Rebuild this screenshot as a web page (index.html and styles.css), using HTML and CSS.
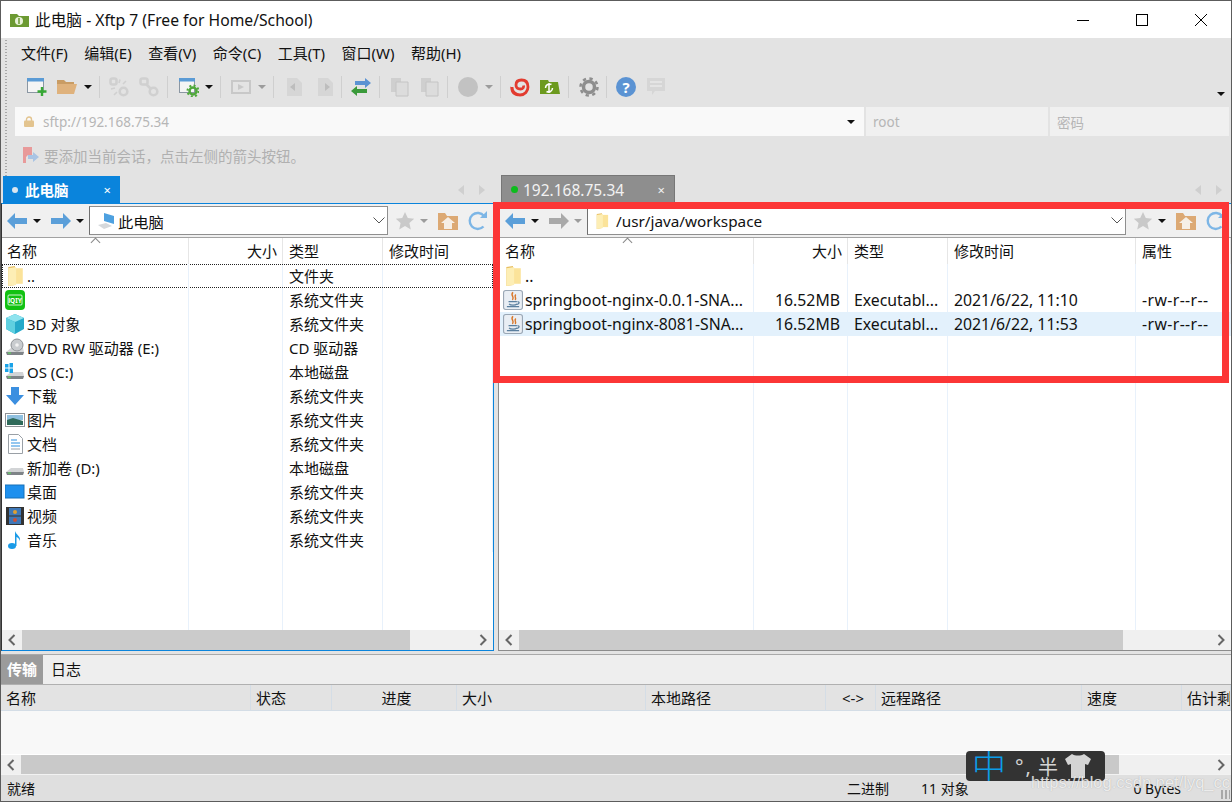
FILE: index.html
```html
<!DOCTYPE html>
<html lang="zh-CN">
<head>
    <meta charset="UTF-8">
    <title>此电脑 - Xftp 7</title>
    <link rel="stylesheet" href="styles.css">
</head>
<body>
<svg class="defs" xmlns="http://www.w3.org/2000/svg">
    <symbol id="back" viewBox="0 0 20 16"><path d="M0 8 8 0V5H20V11H8V16Z"/></symbol>
    <symbol id="forward" viewBox="0 0 20 16"><path d="M20 8 12 0V5H0V11H12V16Z"/></symbol>
    <symbol id="star" viewBox="0 0 20 20"><path d="M10 1l2.8 6 6.4.7-4.8 4.3 1.4 6.4L10 15.100 4.200 18.400 5.600 12 .8 7.700 7.200 7Z" fill="#c9c9c9"/></symbol>
    <symbol id="home" viewBox="0 0 20 18"><path d="M0 1h7l2 3h11v14H0Z" fill="#dca974"/><path d="M3 11 10 5l7 6h-3v6H6v-6Z" fill="#f6efe6"/></symbol>
    <symbol id="refresh" viewBox="0 0 20 20"><path d="M15.500 15.500A8 8 0 1 1 16 5" fill="none" stroke="#7db6e6" stroke-width="2.400"/><path d="M12 7h7V0Z" fill="#7db6e6"/></symbol>
    <symbol id="folder" viewBox="0 0 16 18"><path d="M2 1 8 0v17l-6 1Z" fill="#e8bf62"/><path d="M7 2h8v14H7Z" fill="#fbe39a"/><path d="M2 2 9 1v16l-7 1Z" fill="#fdeeb5"/></symbol>
    <symbol id="java" viewBox="0 0 18 18">
        <rect x=".5" y=".5" width="17" height="17" rx="2" fill="#e9eef4" stroke="#9aa7b5"/>
        <path d="M9 2C6 5 11 6 8.500 9M11.500 4C9.500 6 12.500 7 11 9" fill="none" stroke="#d9772a" stroke-width="1.300"/>
        <path d="M5 10.500h7.500M5.500 12.500c1 1.500 6 1.500 7 0M13 10.500c2 0 2 2-.5 2.500M3.500 15h11" fill="none" stroke="#5a7f9f" stroke-width="1.100"/>
    </symbol>
    <symbol id="drive" viewBox="0 0 20 20"><path d="M1 14 6 10h12l1 4-1 3H2Z" fill="#d2d4d6"/><path d="M1 14h18l-1 3H2Z" fill="#7f8488"/><rect x="3" y="14.500" width="3" height="1.200" fill="#5fd35f"/></symbol>
</svg>

<div class="window">
    <div class="titlebar">
        <svg class="title-icon" viewBox="0 0 19 14"><path d="M0 1h7l2 2h10v11H0Z" fill="#6c9a32"/><circle cx="9" cy="8" r="4" fill="#e8f2d8"/><path d="M9 5v6" stroke="#6c9a32" stroke-width="1.500"/></svg>
        <span class="title-text">此电脑 - Xftp 7 (Free for Home/School)</span>
        <div class="win-buttons">
            <svg class="win-btn" viewBox="0 0 12 12"><path d="M0 6.500h12" stroke="#000"/></svg>
            <svg class="win-btn" viewBox="0 0 12 12"><rect x=".5" y=".5" width="11" height="11" fill="none" stroke="#000"/></svg>
            <svg class="win-btn" viewBox="0 0 12 12"><path d="M0 0 12 12M12 0 0 12" stroke="#000"/></svg>
        </div>
    </div>

    <div class="chrome">
        <div class="menu">
            <span>文件(F)</span><span>编辑(E)</span><span>查看(V)</span><span>命令(C)</span><span>工具(T)</span><span>窗口(W)</span><span>帮助(H)</span>
        </div>

        <div class="toolbar">
            <svg class="tool" viewBox="0 0 20 20"><rect x=".5" y="1.500" width="16" height="14" fill="#f5f5f5" stroke="#8b97a3"/><rect y="1" width="17" height="3.500" fill="#5b9bd5"/><path d="M15 10v9M10.500 14.500h9" stroke="#37a835" stroke-width="2.400"/></svg>
            <svg class="tool" viewBox="0 0 20 20"><path d="M0 3h7l2 2h8v3H0Z" fill="#c99c64"/><path d="M0 17V7h20l-3 10Z" fill="#dfb27d"/></svg>
            <i class="caret"></i>
            <i class="sep"></i>
            <svg class="tool" viewBox="0 0 20 20" fill="none" stroke="#d0d0d0" stroke-width="2.600"><rect x="1.500" y="1.500" width="6" height="6" rx="2"/><circle cx="14.500" cy="14.500" r="3.800"/><path d="M11 2.500 10 6M17 4l-3 3M2 12l4-1M5 18l3-3" stroke-width="1.600"/></svg>
            <svg class="tool" viewBox="0 0 20 20" fill="none" stroke="#d0d0d0" stroke-width="2.600"><rect x="1.500" y="1.500" width="7" height="6" rx="2"/><circle cx="14.500" cy="14.500" r="3.800"/><path d="M7 7l5 5"/></svg>
            <i class="sep"></i>
            <svg class="tool" viewBox="0 0 20 20"><rect x=".5" y="1.500" width="15" height="14" fill="#f5f5f5" stroke="#8b97a3"/><rect y="1" width="16" height="3.500" fill="#5b9bd5"/><circle cx="14" cy="14" r="3.500" fill="none" stroke="#4fa83a" stroke-width="2.500"/><circle cx="14" cy="14" r="5.500" fill="none" stroke="#4fa83a" stroke-width="2" stroke-dasharray="2 2.300"/></svg>
            <i class="caret"></i>
            <i class="sep"></i>
            <svg class="tool" viewBox="0 0 20 20"><rect x="1" y="4" width="18" height="12" fill="none" stroke="#c8c8c8" stroke-width="2"/><path d="M7 7v6l6-3Z" fill="#c8c8c8"/></svg>
            <i class="caret off"></i>
            <i class="sep"></i>
            <svg class="tool" viewBox="0 0 20 20"><path d="M2 1h10l5 5v13H2Z" fill="#d6d6d6"/><path d="M5 10l5-4v8Z" fill="#bdbdbd"/></svg>
            <svg class="tool" viewBox="0 0 20 20"><path d="M2 1h10l5 5v13H2Z" fill="#d6d6d6"/><path d="M14 10 9 6v8Z" fill="#bdbdbd"/></svg>
            <i class="sep"></i>
            <svg class="tool" viewBox="0 0 20 20"><path d="M20 6 14 1v3H4v4h10v3Z" fill="#5b93d3"/><path d="M0 14l6-5v3h10v4H6v3Z" fill="#3a9a3a"/></svg>
            <i class="sep"></i>
            <svg class="tool" viewBox="0 0 20 20"><path d="M1 1h10v14H1Z" fill="#cfcfcf"/><path d="M6 5h12v14H6Z" fill="#dcdcdc" stroke="#c4c4c4"/></svg>
            <svg class="tool" viewBox="0 0 20 20"><path d="M1 1h10v14H1Z" fill="#cfcfcf"/><path d="M6 5h12v14H6Z" fill="#dcdcdc" stroke="#c4c4c4"/></svg>
            <i class="sep"></i>
            <svg class="tool" viewBox="0 0 20 20"><circle cx="10" cy="10" r="10" fill="#c2c2c2"/></svg>
            <i class="caret off"></i>
            <i class="sep"></i>
            <svg class="tool" viewBox="0 0 20 20"><path d="M2 10c0 5 4 8 8 8 5 0 8-4 8-8 0-5-3-7-6.500-7S6 5 6 8c0 3 2 4 4.500 4s3.500-1.500 3-3.500" fill="none" stroke="#e23c30" stroke-width="2.800"/><path d="M.5 9c1 5 4 8 9 10-5 1-10-3-9-10Z" fill="#e23c30"/></svg>
            <svg class="tool" viewBox="0 0 20 20"><path d="M0 3h8l1 2h9l2 12H0Z" fill="#6c9a1e"/><path d="M5.500 11a4 4 0 0 1 6-3.500M12.500 11a4 4 0 0 1-6 3.500M9 6v10" fill="none" stroke="#fff" stroke-width="1.500"/></svg>
            <i class="sep"></i>
            <svg class="tool" viewBox="0 0 20 20"><circle cx="10" cy="10" r="5.500" fill="none" stroke="#8e8e8e" stroke-width="3.500"/><circle cx="10" cy="10" r="8.500" fill="none" stroke="#8e8e8e" stroke-width="2.500" stroke-dasharray="3.300 3.400"/></svg>
            <i class="sep"></i>
            <svg class="tool" viewBox="0 0 20 20"><circle cx="10" cy="10" r="10" fill="#5b93d3"/><text x="10" y="15.500" class="help-mark">?</text></svg>
            <svg class="tool" viewBox="0 0 20 20"><path d="M1 1h18v13H9l-3 4v-4H1Z" fill="#d6d6d6"/><path d="M4 5h12M4 9h12" stroke="#e9e9e9" stroke-width="1.500"/></svg>
            <i class="caret end"></i>
        </div>

        <div class="address">
            <div class="addr-main">
                <svg class="lock" viewBox="0 0 10 11"><path d="M2.500 5V3.500a2.500 2.500 0 0 1 5 0V5" fill="none" stroke="#e3c48f" stroke-width="1.400"/><rect y="4.500" width="10" height="6.500" rx="1" fill="#e3c48f"/></svg>
                <span class="addr-url">sftp://192.168.75.34</span>
                <i class="caret"></i>
            </div>
            <div class="addr-field addr-user">root</div>
            <div class="addr-field addr-pass">密码</div>
        </div>

        <div class="hint">
            <svg class="hint-icon" viewBox="0 0 16 16"><path d="M0 0h9v10L5 8l-2 2v6H0Z" fill="#e89a9a"/><path d="M16 10l-6-5v3H5v4h5v3Z" fill="#a9c4e4"/></svg>
            <span>要添加当前会话，点击左侧的箭头按钮。</span>
        </div>
    </div>

    <div class="panes">
        <div class="side side-local">
            <div class="tabstrip">
                <div class="tab tab-active"><i class="dot dot-white"></i><span class="tab-label">此电脑</span><span class="tab-close">×</span></div>
                <div class="tab-arrows"><i class="tri-left"></i><i class="tri-right"></i></div>
            </div>
            <div class="pane pane-local">
                <div class="nav">
                    <svg class="nav-arrow arrow-on"><use href="#back"/></svg>
                    <i class="caret"></i>
                    <svg class="nav-arrow arrow-on nav-fwd"><use href="#forward"/></svg>
                    <i class="caret"></i>
                    <div class="path">
                        <svg class="path-pc" viewBox="0 0 18 18"><path d="M7 1l10 3v8L7 9Z" fill="#4ea1e0"/><path d="M1 13l8-2 6 3-8 3Z" fill="#d5d8db"/></svg>
                        <span class="path-text">此电脑</span>
                        <svg class="chevron" viewBox="0 0 12 7"><path d="M.5 .5 6 6 11.500 .5" fill="none" stroke="#555"/></svg>
                    </div>
                    <svg class="nav-star"><use href="#star"/></svg>
                    <i class="caret off"></i>
                    <svg class="nav-home"><use href="#home"/></svg>
                    <svg class="nav-refresh"><use href="#refresh"/></svg>
                </div>
                <div class="row head">
                    <div class="cell name">名称<i class="sort"></i></div>
                    <div class="cell size">大小</div>
                    <div class="cell">类型</div>
                    <div class="cell">修改时间</div>
                </div>
                <div class="list">
                    <div class="row focus"><div class="cell name"><svg class="file-icon"><use href="#folder"/></svg>..</div><div class="cell size"></div><div class="cell">文件夹</div><div class="cell"></div></div>
                    <div class="row"><div class="cell name"><svg class="file-icon" viewBox="0 0 20 20"><rect width="20" height="20" rx="4" fill="#12c212"/><rect x="3" y="5" width="14" height="10" rx="1" fill="none" stroke="#fff" stroke-width=".8"/><text x="10" y="13" class="iqiyi">iQIY</text></svg></div><div class="cell size"></div><div class="cell">系统文件夹</div><div class="cell"></div></div>
                    <div class="row"><div class="cell name"><svg class="file-icon" viewBox="0 0 20 20"><path d="M10 0l9 4v11l-9 5-9-5V4Z" fill="#25a9c9"/><path d="M10 0l9 4-9 4-9-4Z" fill="#8fe3ee"/><path d="M1 4l9 4v12l-9-5Z" fill="#5fd0e0"/></svg>3D 对象</div><div class="cell size"></div><div class="cell">系统文件夹</div><div class="cell"></div></div>
                    <div class="row"><div class="cell name"><svg class="file-icon" viewBox="0 0 20 20"><use href="#drive"/><circle cx="12" cy="7" r="6" fill="#c9cccf" stroke="#8e9296"/><circle cx="12" cy="7" r="1.800" fill="#f3f3f3"/></svg>DVD RW 驱动器 (E:)</div><div class="cell size"></div><div class="cell">CD 驱动器</div><div class="cell"></div></div>
                    <div class="row"><div class="cell name"><svg class="file-icon" viewBox="0 0 20 20"><use href="#drive"/><path d="M0 2h3.500v3.500H0ZM4.500 1h3.500v4.500H4.500ZM0 6.500h3.500V10H0ZM4.500 6.500h3.500V11H4.500Z" fill="#1aa3e8"/></svg>OS (C:)</div><div class="cell size"></div><div class="cell">本地磁盘</div><div class="cell"></div></div>
                    <div class="row"><div class="cell name"><svg class="file-icon" viewBox="0 0 20 20"><path d="M6 1h8v8h5l-9 10L1 9h5Z" fill="#3b8fe0"/></svg>下载</div><div class="cell size"></div><div class="cell">系统文件夹</div><div class="cell"></div></div>
                    <div class="row"><div class="cell name"><svg class="file-icon" viewBox="0 0 20 20"><rect x=".5" y="3.500" width="19" height="13" fill="#fff" stroke="#8e9296"/><rect x="2" y="5" width="16" height="5" fill="#8fc0e0"/><path d="M2 10l6-2 10 3v4H2Z" fill="#2f6a5a"/></svg>图片</div><div class="cell size"></div><div class="cell">系统文件夹</div><div class="cell"></div></div>
                    <div class="row"><div class="cell name"><svg class="file-icon" viewBox="0 0 20 20"><path d="M3.500 .5h10l4 4v15h-14Z" fill="#fff" stroke="#9aa0a6"/><path d="M6 6h6M6 9h9M6 12h9" stroke="#2a8fe0"/><path d="M6 15h9" stroke="#9aa0a6"/></svg>文档</div><div class="cell size"></div><div class="cell">系统文件夹</div><div class="cell"></div></div>
                    <div class="row"><div class="cell name"><svg class="file-icon" viewBox="0 0 20 20"><use href="#drive"/></svg>新加卷 (D:)</div><div class="cell size"></div><div class="cell">本地磁盘</div><div class="cell"></div></div>
                    <div class="row"><div class="cell name"><svg class="file-icon" viewBox="0 0 20 20"><rect y="3" width="19" height="13" fill="#1e90ee" stroke="#1670b8"/></svg>桌面</div><div class="cell size"></div><div class="cell">系统文件夹</div><div class="cell"></div></div>
                    <div class="row"><div class="cell name"><svg class="file-icon" viewBox="0 0 20 20"><rect x="1" y="1" width="18" height="18" fill="#333"/><rect x="4" y="2" width="12" height="7.500" fill="#3f78b8"/><rect x="4" y="10.500" width="12" height="7.500" fill="#3f78b8"/><circle cx="10" cy="6" r="2" fill="#e0a030"/><circle cx="10" cy="14" r="2" fill="#c9503a"/></svg>视频</div><div class="cell size"></div><div class="cell">系统文件夹</div><div class="cell"></div></div>
                    <div class="row"><div class="cell name"><svg class="file-icon" viewBox="0 0 20 20"><ellipse cx="7" cy="16" rx="4" ry="3" fill="#1a9be8"/><path d="M10 16V1c1 4 6 5 5 10-1-3-3-4-3.500-4V16Z" fill="#1a9be8"/></svg>音乐</div><div class="cell size"></div><div class="cell">系统文件夹</div><div class="cell"></div></div>
                </div>
                <div class="hscroll">
                    <svg class="scroll-arrow" viewBox="0 0 8 12"><path d="M6.500 1 1.500 6l5 5" fill="none" stroke="#666" stroke-width="2"/></svg>
                    <div class="track"><div class="thumb thumb-local"></div></div>
                    <svg class="scroll-arrow" viewBox="0 0 8 12"><path d="M1.500 1l5 5-5 5" fill="none" stroke="#666" stroke-width="2"/></svg>
                </div>
            </div>
        </div>

        <div class="side side-remote">
            <div class="tabstrip">
                <div class="tab tab-idle"><i class="dot dot-green"></i><span class="tab-label">192.168.75.34</span><span class="tab-close">×</span></div>
                <div class="tab-arrows"><i class="tri-left"></i><i class="tri-right"></i></div>
            </div>
            <div class="pane pane-remote">
                <div class="nav">
                    <svg class="nav-arrow arrow-on"><use href="#back"/></svg>
                    <i class="caret"></i>
                    <svg class="nav-arrow arrow-off nav-fwd"><use href="#forward"/></svg>
                    <i class="caret off"></i>
                    <div class="path">
                        <svg class="path-folder"><use href="#folder"/></svg>
                        <span class="path-text">/usr/java/workspace</span>
                        <svg class="chevron" viewBox="0 0 12 7"><path d="M.5 .5 6 6 11.500 .5" fill="none" stroke="#555"/></svg>
                    </div>
                    <svg class="nav-star"><use href="#star"/></svg>
                    <i class="caret"></i>
                    <svg class="nav-home"><use href="#home"/></svg>
                    <svg class="nav-refresh"><use href="#refresh"/></svg>
                </div>
                <div class="row head">
                    <div class="cell name">名称<i class="sort"></i></div>
                    <div class="cell size">大小</div>
                    <div class="cell">类型</div>
                    <div class="cell">修改时间</div>
                    <div class="cell">属性</div>
                </div>
                <div class="list">
                    <div class="row"><div class="cell name"><svg class="file-icon"><use href="#folder"/></svg>..</div><div class="cell size"></div><div class="cell"></div><div class="cell"></div><div class="cell"></div></div>
                    <div class="row"><div class="cell name"><svg class="file-icon"><use href="#java"/></svg>springboot-nginx-0.0.1-SNA...</div><div class="cell size">16.52MB</div><div class="cell">Executabl...</div><div class="cell">2021/6/22, 11:10</div><div class="cell">-rw-r--r--</div></div>
                    <div class="row selected"><div class="cell name"><svg class="file-icon"><use href="#java"/></svg>springboot-nginx-8081-SNA...</div><div class="cell size">16.52MB</div><div class="cell">Executabl...</div><div class="cell">2021/6/22, 11:53</div><div class="cell">-rw-r--r--</div></div>
                </div>
                <div class="hscroll">
                    <svg class="scroll-arrow" viewBox="0 0 8 12"><path d="M6.500 1 1.500 6l5 5" fill="none" stroke="#666" stroke-width="2"/></svg>
                    <div class="track"><div class="thumb thumb-remote"></div></div>
                    <svg class="scroll-arrow" viewBox="0 0 8 12"><path d="M1.500 1l5 5-5 5" fill="none" stroke="#666" stroke-width="2"/></svg>
                </div>
            </div>
        </div>
    </div>

    <div class="transfer">
        <div class="transfer-tabs"><span class="ttab ttab-on">传输</span><span class="ttab">日志</span></div>
        <div class="tcols">
            <span>名称</span><span>状态</span><span class="center">进度</span><span>大小</span><span>本地路径</span><span class="center">&lt;-&gt;</span><span>远程路径</span><span>速度</span><span>估计剩余时间</span>
        </div>
        <div class="tlist"></div>
        <div class="hscroll hscroll-transfer">
            <svg class="scroll-arrow" viewBox="0 0 8 12"><path d="M6.500 1 1.500 6l5 5" fill="none" stroke="#666" stroke-width="2"/></svg>
            <div class="track"><div class="thumb thumb-transfer"></div></div>
            <svg class="scroll-arrow" viewBox="0 0 8 12"><path d="M1.500 1l5 5-5 5" fill="none" stroke="#666" stroke-width="2"/></svg>
        </div>
    </div>

    <div class="status">
        <span class="st-ready">就绪</span>
        <span class="st-mode">二进制</span>
        <span class="st-count">11 对象</span>
        <span class="st-bytes">0 Bytes</span>
        <i class="st-grip"></i>
    </div>
</div>

<!-- annotation, input method bar and watermark sit on top of the screenshot -->
<div class="redbox"></div>
<div class="ime">
    <span class="ime-zh">中</span><span class="ime-mark">°,</span><span class="ime-half">半</span>
    <svg class="ime-shirt" viewBox="0 0 26 26"><path d="M7 1c3 2 9 2 12 0l7 5-3 6-3-1v14H6V11l-3 1-3-6Z" fill="#d4d4d4"/></svg>
</div>
<div class="watermark">https://blog.csdn.net/lyq_cc</div>
</body>
</html>
```

FILE: styles.css
```css
* {
    box-sizing: border-box;
}

html, body {
    margin: 0;
    padding: 0;
    width: 1232px;
    height: 802px;
    overflow: hidden;
}

body {
    position: relative;
    font-family: "Noto Sans", "Noto Sans CJK SC", sans-serif;
    font-size: 15px;
    color: #111;
    background: #fff;
}

i {
    display: block;
}

.defs {
    display: none;
}

.window {
    display: flex;
    flex-direction: column;
    width: 1232px;
    height: 802px;
    border: 1px solid #5c5c5c;
    background: #e3e3e3;
}

/* title bar */

.titlebar {
    display: flex;
    align-items: center;
    flex: none;
    height: 37px;
    padding-left: 9px;
    background: #fff;
}

.title-icon {
    width: 19px;
    height: 14px;
}

.title-text {
    margin-left: 6px;
    font-size: 15.700px;
}

.win-buttons {
    display: flex;
    align-items: center;
    gap: 47px;
    margin-left: auto;
    margin-right: 24px;
}

.win-btn {
    width: 12px;
    height: 12px;
}

/* menu, toolbar, address */

.chrome {
    flex: none;
    height: 138px;
    background: repeating-linear-gradient(#a8a8a8 0 1px, transparent 1px 3px) 4px 2px / 2px 100% no-repeat #e3e3e3;
}

.menu {
    display: flex;
    gap: 16.500px;
    align-items: center;
    height: 29px;
    padding-left: 20px;
}

.toolbar {
    display: grid;
    grid-template-columns: 30px 27px 15px 10px 30px 28px 12px 26px 15px 11px 27px 15px 12px 31px 25px 10px 28px 11px 30px 27px 11px 27px 15px 10px 30px 28px 11px 27px 10px 30px 30px 1fr;
    align-items: center;
    height: 40px;
    padding-left: 26px;
}

.tool {
    width: 20px;
    height: 20px;
}

.help-mark {
    font-size: 15px;
    font-weight: 700;
    text-anchor: middle;
    fill: #fff;
}

.iqiyi {
    font-size: 6.500px;
    font-weight: 700;
    text-anchor: middle;
    fill: #fff;
}

.caret {
    width: 0;
    height: 0;
    border-left: 4px solid transparent;
    border-right: 4px solid transparent;
    border-top: 4px solid #111;
}

.caret.off {
    border-top-color: #9c9c9c;
}

.caret.end {
    justify-self: end;
    align-self: end;
    margin: 0 6px 11px 0;
}

.sep {
    width: 1px;
    height: 22px;
    background: #cfcfcf;
}

.address {
    display: flex;
    gap: 2px;
    height: 29px;
    padding: 0 2px 0 14px;
    font-size: 13.500px;
    color: #b6b6b6;
}

.addr-main {
    display: flex;
    align-items: center;
    width: 849px;
    padding-left: 9px;
    background: #f9f9f9;
}

.lock {
    width: 10px;
    height: 11px;
}

.addr-url {
    margin-left: 9px;
    padding-top: 1px;
}

.addr-main .caret {
    margin-left: auto;
    margin-right: 9px;
}

.addr-field {
    display: flex;
    align-items: center;
    padding-left: 7px;
    background: #f0f0f0;
}

.addr-user {
    width: 182px;
}

.addr-pass {
    flex: 1;
}

.hint {
    display: flex;
    align-items: center;
    height: 40px;
    padding: 0 0 2px 22px;
    color: #b0b0b0;
    font-size: 14.500px;
}

.hint-icon {
    width: 16px;
    height: 16px;
    margin-right: 5px;
}

/* file panes */

.panes {
    display: flex;
    flex: none;
    height: 475px;
    gap: 4px;
}

.side {
    display: flex;
    flex-direction: column;
}

.side-local {
    width: 493px;
}

.side-remote {
    flex: 1;
    min-width: 0;
}

.tabstrip {
    display: flex;
    flex: none;
    align-items: flex-end;
    height: 27px;
}

.tab {
    display: flex;
    align-items: center;
    height: 27px;
}

.tab-active {
    width: 117px;
    margin-left: 2px;
    padding-left: 9px;
    background: #0a84dc;
    color: #fff;
    font-weight: 700;
    font-size: 14.500px;
}

.tab-idle {
    width: 174px;
    height: 28px;
    margin-left: 3px;
    padding-left: 9px;
    background: #8e8e8e;
    border: 1px solid #777;
    border-bottom: 0;
    color: #f2f2f2;
    font-size: 15.500px;
}

.dot {
    width: 6px;
    height: 6px;
    border-radius: 50%;
}

.dot-white {
    background: #d9e6f0;
}

.dot-green {
    width: 7px;
    height: 7px;
    background: #0cbc1c;
}

.tab-label {
    margin-left: 7px;
}

.tab-idle .tab-label {
    margin-left: 5px;
}

.tab-close {
    margin-left: auto;
    margin-right: 9px;
    font-size: 13px;
    font-weight: 400;
}

.tab-arrows {
    display: flex;
    gap: 15px;
    margin: 0 9px 8px auto;
}

.tri-left, .tri-right {
    width: 0;
    height: 0;
    border-top: 5px solid transparent;
    border-bottom: 5px solid transparent;
}

.tri-left {
    border-right: 6px solid #cfcfcf;
}

.tri-right {
    border-left: 6px solid #cfcfcf;
}

.pane {
    display: flex;
    flex-direction: column;
    flex: 1;
    min-height: 0;
    overflow: hidden;
    background: #fff;
}

.pane-local {
    --cols: 187px 94px 100px 1fr;
    border: 1px solid #0a84dc;
    border-left-color: #333;
}

.pane-remote {
    --cols: 255px 94px 100px 188px 1fr;
    border: 1px solid #8c8c8c;
    border-right: 0;
    border-top-color: #0a84dc;
}

.nav {
    display: flex;
    flex: none;
    align-items: center;
    height: 34px;
    padding-left: 5px;
    background: #f0f0f0;
    border-bottom: 1px solid #a2a2a2;
}

.pane-remote .nav {
    padding-left: 6px;
}

.nav-arrow {
    flex: none;
    width: 20px;
    height: 16px;
}

.arrow-on {
    fill: #5b9fd9;
}

.arrow-off {
    fill: #a9a9a9;
}

.nav .caret {
    flex: none;
    margin-left: 6px;
}

.nav .nav-fwd {
    margin-left: 10px;
}

.nav-fwd + .caret {
    margin-left: 5px;
}

.path {
    display: flex;
    flex: 1;
    align-items: center;
    min-width: 0;
    height: 29px;
    margin-left: 5px;
    padding-left: 7px;
    background: #fff;
    border: 1px solid #8f8f8f;
    border-left-color: #6f6f6f;
}

.path-pc {
    width: 18px;
    height: 18px;
    margin-right: 3px;
}

.path-folder {
    width: 14px;
    height: 18px;
    margin-right: 7px;
}

.path-text {
    font-size: 15.300px;
}

.chevron {
    width: 12px;
    height: 7px;
    margin-left: auto;
    margin-right: 2px;
}

.nav-star {
    flex: none;
    width: 20px;
    height: 20px;
    margin-left: 7px;
}

.nav-star + .caret {
    margin-left: 5px;
}

.nav-home {
    flex: none;
    width: 20px;
    height: 18px;
    margin-left: 10px;
}

.nav-refresh {
    flex: none;
    width: 20px;
    height: 20px;
    margin-left: 10px;
    margin-right: 5px;
}

.row {
    display: grid;
    grid-template-columns: var(--cols);
    height: 24px;
    align-items: center;
}

.row.head {
    flex: none;
    height: 26px;
    align-items: stretch;
}

.row.head .cell {
    display: flex;
    align-items: center;
    border-right: 1px solid #e6e6e6;
}

.row.head .size {
    justify-content: flex-end;
    padding-right: 5px;
}

.cell {
    height: 100%;
    padding: 0 5px 0 6px;
    line-height: 24px;
    white-space: nowrap;
    overflow: hidden;
    border-right: 1px solid #e8f1fb;
}

.cell.name {
    display: flex;
    align-items: center;
    position: relative;
    padding-left: 6px;
}

.pane-local .cell.name {
    padding-left: 5px;
}

.row.head .name {
    overflow: visible;
}

.cell.size {
    text-align: right;
    padding-right: 7px;
}

/* the latin text of the file rows runs wider than the CJK labels */
.pane-remote .list .cell {
    font-size: 15.800px;
}

.pane-remote .list .cell:last-child {
    letter-spacing: .4px;
}

.sort {
    position: absolute;
    top: 1px;
    left: 90px;
    width: 7px;
    height: 7px;
    border-left: 1px solid #888;
    border-top: 1px solid #888;
    transform: rotate(45deg);
}

.pane-remote .sort {
    left: 125px;
}

.file-icon {
    flex: none;
    width: 20px;
    height: 20px;
    margin: 0 2px 0 -2px;
}

.list {
    flex: 1;
    min-height: 0;
    background: #fff;
}

.pane-local .list {
    background: linear-gradient(#e8f1fb, #e8f1fb) 186px 0 / 1px 100% no-repeat,
        linear-gradient(#e8f1fb, #e8f1fb) 280px 0 / 1px 100% no-repeat,
        linear-gradient(#e8f1fb, #e8f1fb) 380px 0 / 1px 100% no-repeat,
        #fff;
}

.pane-remote .list {
    background: linear-gradient(#e8f1fb, #e8f1fb) 254px 0 / 1px 100% no-repeat,
        linear-gradient(#e8f1fb, #e8f1fb) 348px 0 / 1px 100% no-repeat,
        linear-gradient(#e8f1fb, #e8f1fb) 448px 0 / 1px 100% no-repeat,
        linear-gradient(#e8f1fb, #e8f1fb) 636px 0 / 1px 100% no-repeat,
        #fff;
}

.row.focus {
    outline: 1px dotted #222;
    outline-offset: -1px;
}

.row.selected {
    background: #e3f1fc;
}

.row.selected .cell {
    border-right-color: #e3f1fc;
}

.hscroll {
    display: flex;
    flex: none;
    align-items: center;
    height: 20px;
    background: #f0f0f0;
}

.scroll-arrow {
    flex: none;
    width: 8px;
    height: 12px;
    margin: 0 6px;
}

.track {
    flex: 1;
    height: 100%;
}

.thumb {
    height: 100%;
    background: #cbcbcb;
}

.thumb-local {
    width: 388px;
}

.thumb-remote {
    width: 604px;
}

/* transfer list */

.transfer {
    display: flex;
    flex-direction: column;
    flex: 1;
    min-height: 0;
    margin-top: 3px;
    border-top: 1px solid #a9a9a9;
    background: #eee;
}

.transfer-tabs {
    display: flex;
    flex: none;
    height: 30px;
    border-bottom: 1px solid #b0b0b0;
}

.ttab {
    display: flex;
    align-items: center;
    padding: 0 7px 2px 8px;
}

.ttab-on {
    padding: 0 6px 2px;
    background: #9b9b9b;
    color: #fff;
    font-weight: 700;
}

.tcols {
    display: grid;
    grid-template-columns: 250px 81px 125px 189px 180px 50px 206px 100px 1fr;
    flex: none;
    height: 26px;
    background: #e3e3e3;
    border-bottom: 1px solid #d4dde6;
}

.tcols span {
    display: flex;
    align-items: center;
    padding-left: 5px;
    overflow: hidden;
    white-space: nowrap;
    border-right: 1px solid #d4dde6;
}

.tcols .center {
    justify-content: center;
}

.tlist {
    flex: 1;
    min-height: 0;
    background: #f8f8f8;
    border-bottom: 1px solid #fff;
}

.hscroll-transfer {
    height: 19px;
}

.thumb-transfer {
    width: 1098px;
    background: #c9c9c9;
}

.status {
    display: flex;
    flex: none;
    align-items: center;
    height: 27px;
    padding-left: 6px;
    background: #dfdfdf;
    border-top: 1px solid #f2f2f2;
    font-size: 14px;
}

.st-mode {
    margin-left: 812px;
}

.st-count {
    margin-left: 32px;
}

.st-bytes {
    margin-left: auto;
    margin-right: 50px;
}

.st-grip {
    position: absolute;
    right: 2px;
    bottom: 3px;
    width: 9px;
    height: 9px;
    background: repeating-linear-gradient(90deg, #a8a8a8 0 2px, transparent 2px 4px);
}

/* overlays */

.redbox {
    position: absolute;
    left: 493px;
    top: 202px;
    width: 736px;
    height: 181px;
    border: 7px solid #fc3636;
}

.ime {
    position: absolute;
    left: 966px;
    top: 751px;
    display: flex;
    align-items: center;
    width: 139px;
    height: 30px;
    padding-left: 6px;
    border-radius: 4px;
    background: #333;
    color: #d4d4d4;
    overflow: hidden;
}

.ime-zh {
    font-size: 34px;
    line-height: 30px;
    font-weight: 300;
    color: #0b9de8;
}

.ime-mark {
    margin-left: 9px;
    font-size: 20px;
    letter-spacing: 2px;
}

.ime-half {
    margin-left: 5px;
    font-size: 20px;
}

.ime-shirt {
    width: 26px;
    height: 26px;
    margin-left: 7px;
}

.watermark {
    position: absolute;
    left: 1031px;
    top: 773px;
    font-family: "Liberation Sans", sans-serif;
    font-size: 16.500px;
    color: rgba(255, 255, 255, 0.78);
    text-shadow: 0 0 1px rgba(120, 120, 120, 0.6);
    white-space: nowrap;
}
```
